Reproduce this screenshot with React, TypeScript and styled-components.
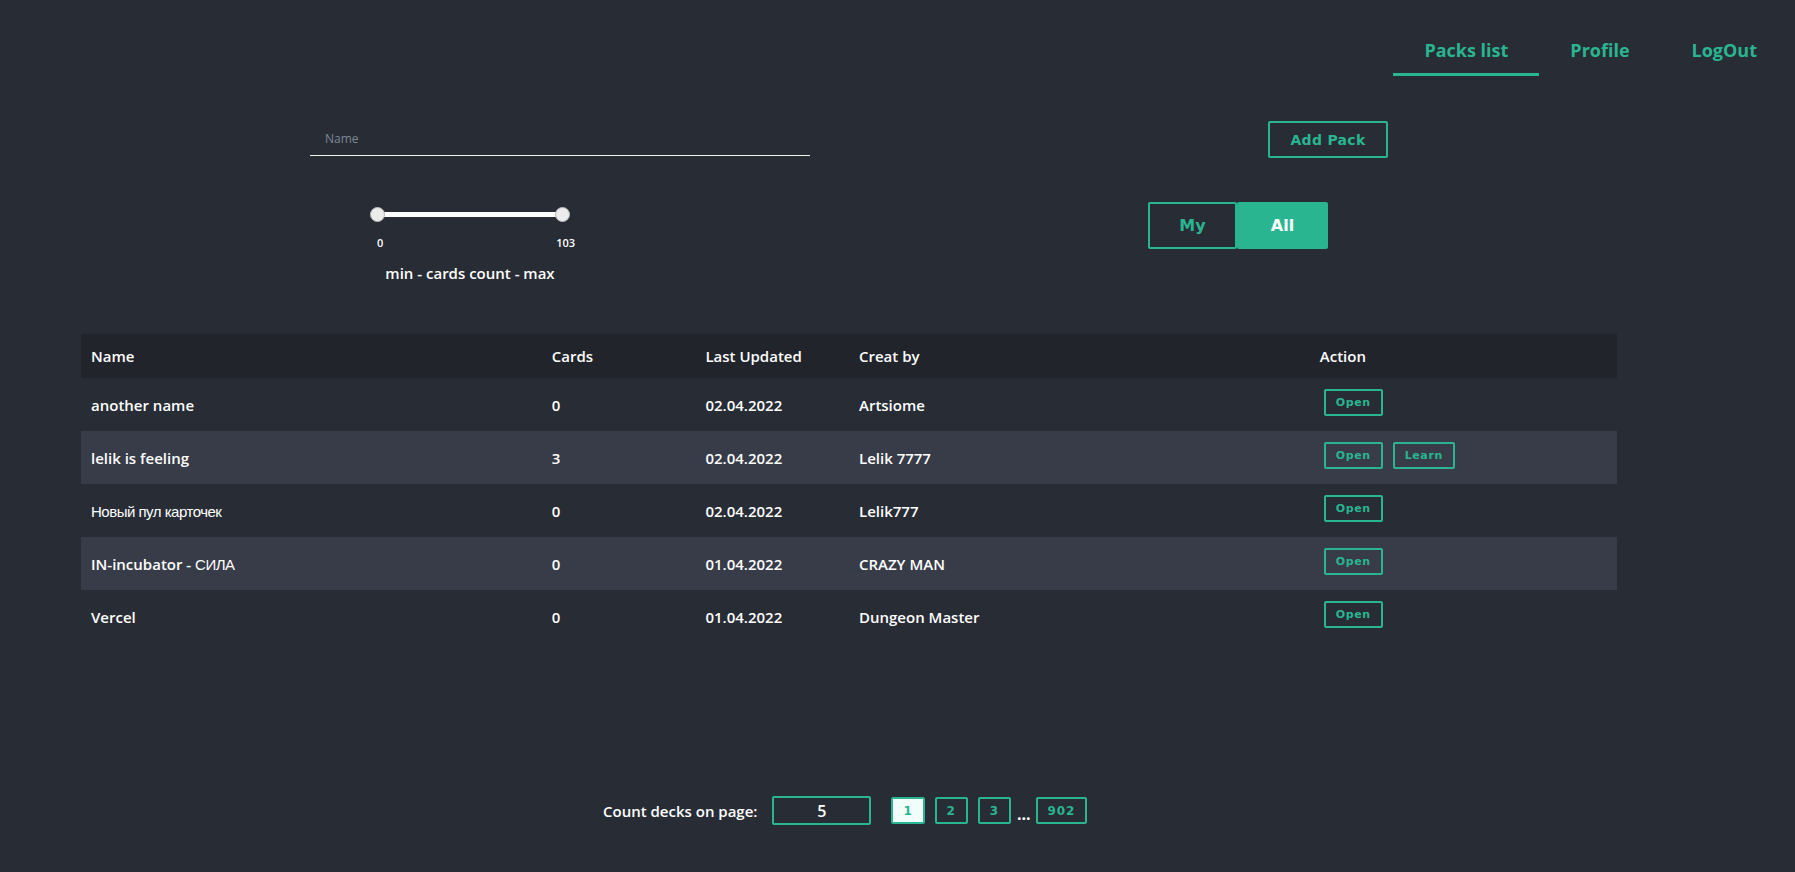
import React from "react";
import styled, { createGlobalStyle } from "styled-components";

const TEAL = "#2ab591";

const GlobalStyle = createGlobalStyle`
  * { box-sizing: border-box; }
  html, body { margin: 0; padding: 0; background: #282c35; }
  body { font-family: "Open Sans", "Noto Sans", sans-serif; color: #fff; min-height: 100vh; }
`;

const Page = styled.div`
  min-height: 872px;
  background: #282c35;
`;

const Nav = styled.nav`
  display: flex;
  justify-content: flex-end;
  padding-right: 7px;
`;

const Tab = styled.a<{ $active?: boolean }>`
  display: block;
  padding: 38px 31px 11px;
  line-height: 24px;
  font-size: 18px;
  font-weight: 700;
  color: ${TEAL};
  text-decoration: none;
  border-bottom: 3px solid ${(p) => (p.$active ? TEAL : "transparent")};
  cursor: pointer;
`;

const Filters = styled.section`
  display: grid;
  grid-template-columns: 500px 1fr;
  padding-left: 310px;
  margin-top: 45px;
`;

const LeftCol = styled.div`
  display: flex;
  flex-direction: column;
`;

const RightCol = styled.div`
  display: flex;
  flex-direction: column;
  align-items: flex-start;
  padding-left: 338px;
`;

const SearchInput = styled.input`
  margin-top: 4px;
  height: 31px;
  width: 100%;
  background: transparent;
  border: none;
  border-bottom: 1px solid #f2f2f2;
  padding: 0 15px 4px;
  font-family: "Open Sans", sans-serif;
  font-size: 12px;
  color: #fff;
  outline: none;
  &::placeholder { color: #7c8796; }
`;

const SliderBlock = styled.div`
  margin: 51px 0 0 60px;
  width: 200px;
  display: flex;
  flex-direction: column;
`;

const SliderTrack = styled.div`
  position: relative;
  height: 15px;
`;

const SliderRange = styled.div`
  position: absolute;
  left: 7px;
  right: 7px;
  top: 5px;
  height: 5px;
  background: #ffffff;
`;

const Thumb = styled.div<{ $side: "left" | "right" }>`
  position: absolute;
  top: 0;
  ${(p) => (p.$side === "left" ? "left: 0;" : "right: 0;")}
  width: 15px;
  height: 15px;
  border-radius: 50%;
  background: #ececec;
  border: 1px solid #b9b9b9;
`;

const SliderLabels = styled.div`
  display: flex;
  justify-content: space-between;
  margin-top: 14px;
  padding: 0 0 0 7px;
  margin-right: -5px;
  font-size: 11px;
  line-height: 14px;
  font-weight: 600;
`;

const Caption = styled.div`
  margin-top: 13px;
  text-align: center;
  font-size: 15px;
  line-height: 20px;
  font-weight: 600;
`;

const OutlineButton = styled.button`
  font-family: "DejaVu Sans", sans-serif;
  font-weight: 700;
  color: ${TEAL};
  background: transparent;
  border: 2px solid ${TEAL};
  border-radius: 2px;
  cursor: pointer;
`;

const AddButton = styled(OutlineButton)`
  margin-left: 120px;
  width: 120px;
  height: 37px;
  font-size: 14px;
  letter-spacing: 0.3px;
`;

const Toggle = styled.div`
  display: flex;
  margin-top: 44px;
`;

const ToggleButton = styled(OutlineButton)<{ $active?: boolean }>`
  width: ${(p) => (p.$active ? 91 : 89)}px;
  height: 47px;
  font-size: 16px;
  border-radius: 2px;
  background: ${(p) => (p.$active ? TEAL : "transparent")};
  color: ${(p) => (p.$active ? "#fff" : TEAL)};
`;

const TableWrap = styled.div`
  margin: 51px 0 0 81px;
  width: 1536px;
`;

const Table = styled.table`
  width: 100%;
  border-collapse: collapse;
  table-layout: fixed;
  font-size: 15px;
  font-weight: 600;
`;

const HeadRow = styled.tr`
  background: #21242b;
  height: 44px;
`;

const Th = styled.th<{ $w: string }>`
  width: ${(p) => p.$w};
  text-align: left;
  padding: 0 10px;
  font-weight: 600;
`;

const Row = styled.tr<{ $striped?: boolean }>`
  height: 53px;
  background: ${(p) => (p.$striped ? "#373c48" : "transparent")};
`;

const Td = styled.td`
  padding: 0 10px;
  white-space: nowrap;
`;

const Cyr = styled.span`
  font-family: "Liberation Sans", Arial, sans-serif;
  font-size: 15px;
  font-weight: 400;
  letter-spacing: -0.5px;
`;

const Actions = styled.div`
  display: flex;
  gap: 10px;
  padding-left: 4px;
  padding-bottom: 5px;
`;

const SmallButton = styled(OutlineButton)`
  height: 27px;
  padding: 0 10px;
  font-size: 11px;
  letter-spacing: 0.6px;
`;

const Pagination = styled.div`
  display: flex;
  align-items: center;
  justify-content: center;
  margin-top: 153px;
  padding-right: 8px;
`;

const CountLabel = styled.span`
  font-size: 15px;
  font-weight: 600;
  margin-right: 15px;
`;

const CountInput = styled.input`
  width: 99px;
  height: 29px;
  background: transparent;
  border: 2px solid ${TEAL};
  border-radius: 2px;
  color: #fff;
  text-align: center;
  font-family: "Open Sans", sans-serif;
  font-size: 16px;
  font-weight: 600;
  outline: none;
  margin-right: 20px;
`;

const Pages = styled.div`
  display: flex;
  align-items: center;
  gap: 10px;
`;

const PageButton = styled(OutlineButton)<{ $active?: boolean }>`
  min-width: 32px;
  height: 27px;
  padding: 0 10px;
  font-size: 12px;
  letter-spacing: 0.8px;
  background: ${(p) => (p.$active ? "#f0fdf9" : "transparent")};
`;

const Dots = styled.span`
  font-size: 16px;
  font-weight: 700;
  line-height: 1;
  align-self: flex-end;
  margin: 0 -5px 0 -4px;
  padding-bottom: 2px;
`;

type Pack = {
  name: React.ReactNode;
  cards: number;
  updated: string;
  author: string;
  learn?: boolean;
};

const packs: Pack[] = [
  { name: "another name", cards: 0, updated: "02.04.2022", author: "Artsiome" },
  { name: "lelik is feeling", cards: 3, updated: "02.04.2022", author: "Lelik 7777", learn: true },
  { name: <Cyr>Новый пул карточек</Cyr>, cards: 0, updated: "02.04.2022", author: "Lelik777" },
  { name: <>IN-incubator - <Cyr>СИЛА</Cyr></>, cards: 0, updated: "01.04.2022", author: "CRAZY MAN" },
  { name: "Vercel", cards: 0, updated: "01.04.2022", author: "Dungeon Master" },
];

export default function App() {
  return (
    <Page>
      <GlobalStyle />
      <Nav>
        <Tab $active>Packs list</Tab>
        <Tab>Profile</Tab>
        <Tab>LogOut</Tab>
      </Nav>

      <Filters>
        <LeftCol>
          <SearchInput placeholder="Name" />
          <SliderBlock>
            <SliderTrack>
              <SliderRange />
              <Thumb $side="left" />
              <Thumb $side="right" />
            </SliderTrack>
            <SliderLabels>
              <span>0</span>
              <span>103</span>
            </SliderLabels>
            <Caption>min - cards count - max</Caption>
          </SliderBlock>
        </LeftCol>
        <RightCol>
          <AddButton>Add Pack</AddButton>
          <Toggle>
            <ToggleButton>My</ToggleButton>
            <ToggleButton $active>All</ToggleButton>
          </Toggle>
        </RightCol>
      </Filters>

      <TableWrap>
        <Table>
          <thead>
            <HeadRow>
              <Th $w="30%">Name</Th>
              <Th $w="10%">Cards</Th>
              <Th $w="10%">Last Updated</Th>
              <Th $w="30%">Creat by</Th>
              <Th $w="20%">Action</Th>
            </HeadRow>
          </thead>
          <tbody>
            {packs.map((p, i) => (
              <Row key={i} $striped={i % 2 === 1}>
                <Td>{p.name}</Td>
                <Td>{p.cards}</Td>
                <Td>{p.updated}</Td>
                <Td>{p.author}</Td>
                <Td>
                  <Actions>
                    <SmallButton>Open</SmallButton>
                    {p.learn && <SmallButton>Learn</SmallButton>}
                  </Actions>
                </Td>
              </Row>
            ))}
          </tbody>
        </Table>

        <Pagination>
          <CountLabel>Count decks on page:</CountLabel>
          <CountInput defaultValue="5" />
          <Pages>
            <PageButton $active>1</PageButton>
            <PageButton>2</PageButton>
            <PageButton>3</PageButton>
            <Dots>...</Dots>
            <PageButton>902</PageButton>
          </Pages>
        </Pagination>
      </TableWrap>
    </Page>
  );
}
